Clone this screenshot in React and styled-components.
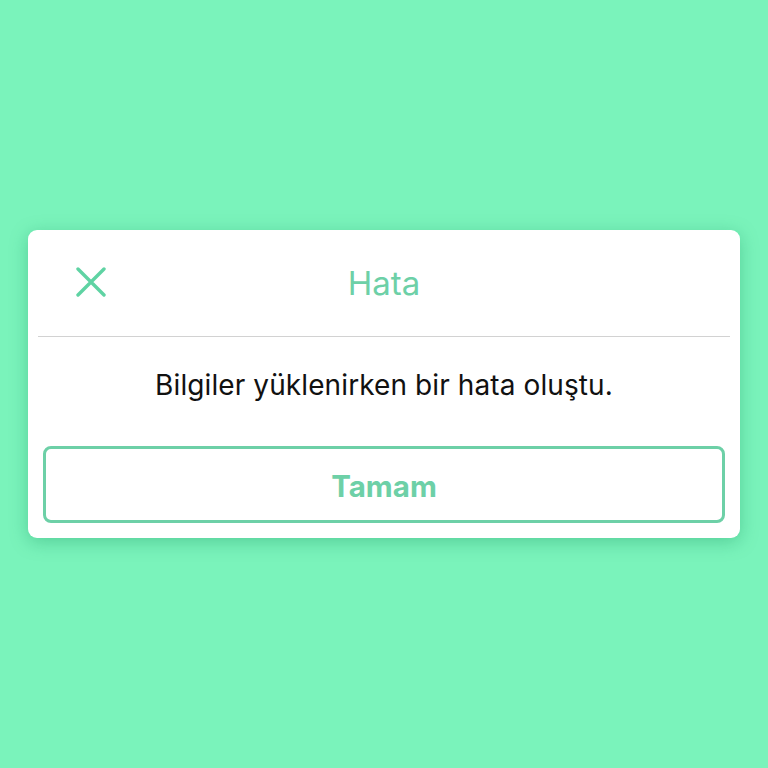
import React from "react";
import styled, { createGlobalStyle } from "styled-components";

const Global = createGlobalStyle`
  html, body { margin: 0; padding: 0; }
  body {
    background: #7af3bb;
    font-family: Inter, "Noto Sans", sans-serif;
    -webkit-font-smoothing: antialiased;
  }
`;

const Screen = styled.div`
  width: 768px;
  height: 768px;
  display: flex;
  align-items: flex-start;
  justify-content: center;
  padding-top: 230px;
  box-sizing: border-box;
  background: #7af3bb;
`;

const Dialog = styled.div`
  width: 712px;
  background: #fff;
  border-radius: 9px;
  box-shadow: 0 4px 18px rgba(20, 140, 90, 0.35);
  display: flex;
  flex-direction: column;
  padding: 0 10px 15px;
  box-sizing: border-box;
`;

const Header = styled.div`
  height: 106px;
  display: grid;
  grid-template-columns: 106px 1fr 106px;
  align-items: center;
  border-bottom: 1px solid #d2d2d2;
`;

const CloseButton = styled.button`
  border: none;
  background: none;
  padding: 0;
  margin-left: 38px;
  width: 30px;
  height: 30px;
  display: flex;
  align-items: center;
  justify-content: center;
  cursor: pointer;
  margin-top: -2px;
`;

const Title = styled.h1`
  margin: 0;
  text-align: center;
  font-size: 33px;
  font-weight: 400;
  color: #6dd0a7;
  margin-top: 0;
`;

const Message = styled.p`
  margin: 0;
  padding: 31px 0 0;
  height: 109px;
  box-sizing: border-box;
  text-align: center;
  font-size: 28px;
  color: #111;
  letter-spacing: 0.1px;
`;

const ConfirmButton = styled.button`
  margin: 0 5px;
  height: 77px;
  border: 3px solid #6dd0a7;
  border-radius: 8px;
  background: #fff;
  color: #6dd0a7;
  font-family: inherit;
  font-size: 29.5px;
  font-weight: 700;
  cursor: pointer;
  padding: 2px 0 0;
`;

function CloseIcon() {
  return (
    <svg width="30" height="30" viewBox="0 0 30 30" fill="none">
      <path
        d="M2 2 L28 28 M28 2 L2 28"
        stroke="#5fd3a3"
        strokeWidth="3.4"
        strokeLinecap="round"
      />
    </svg>
  );
}

export default function App() {
  return (
    <>
      <Global />
      <Screen>
        <Dialog>
          <Header>
            <CloseButton aria-label="Kapat">
              <CloseIcon />
            </CloseButton>
            <Title>Hata</Title>
            <span />
          </Header>
          <Message>Bilgiler yüklenirken bir hata oluştu.</Message>
          <ConfirmButton>Tamam</ConfirmButton>
        </Dialog>
      </Screen>
    </>
  );
}
